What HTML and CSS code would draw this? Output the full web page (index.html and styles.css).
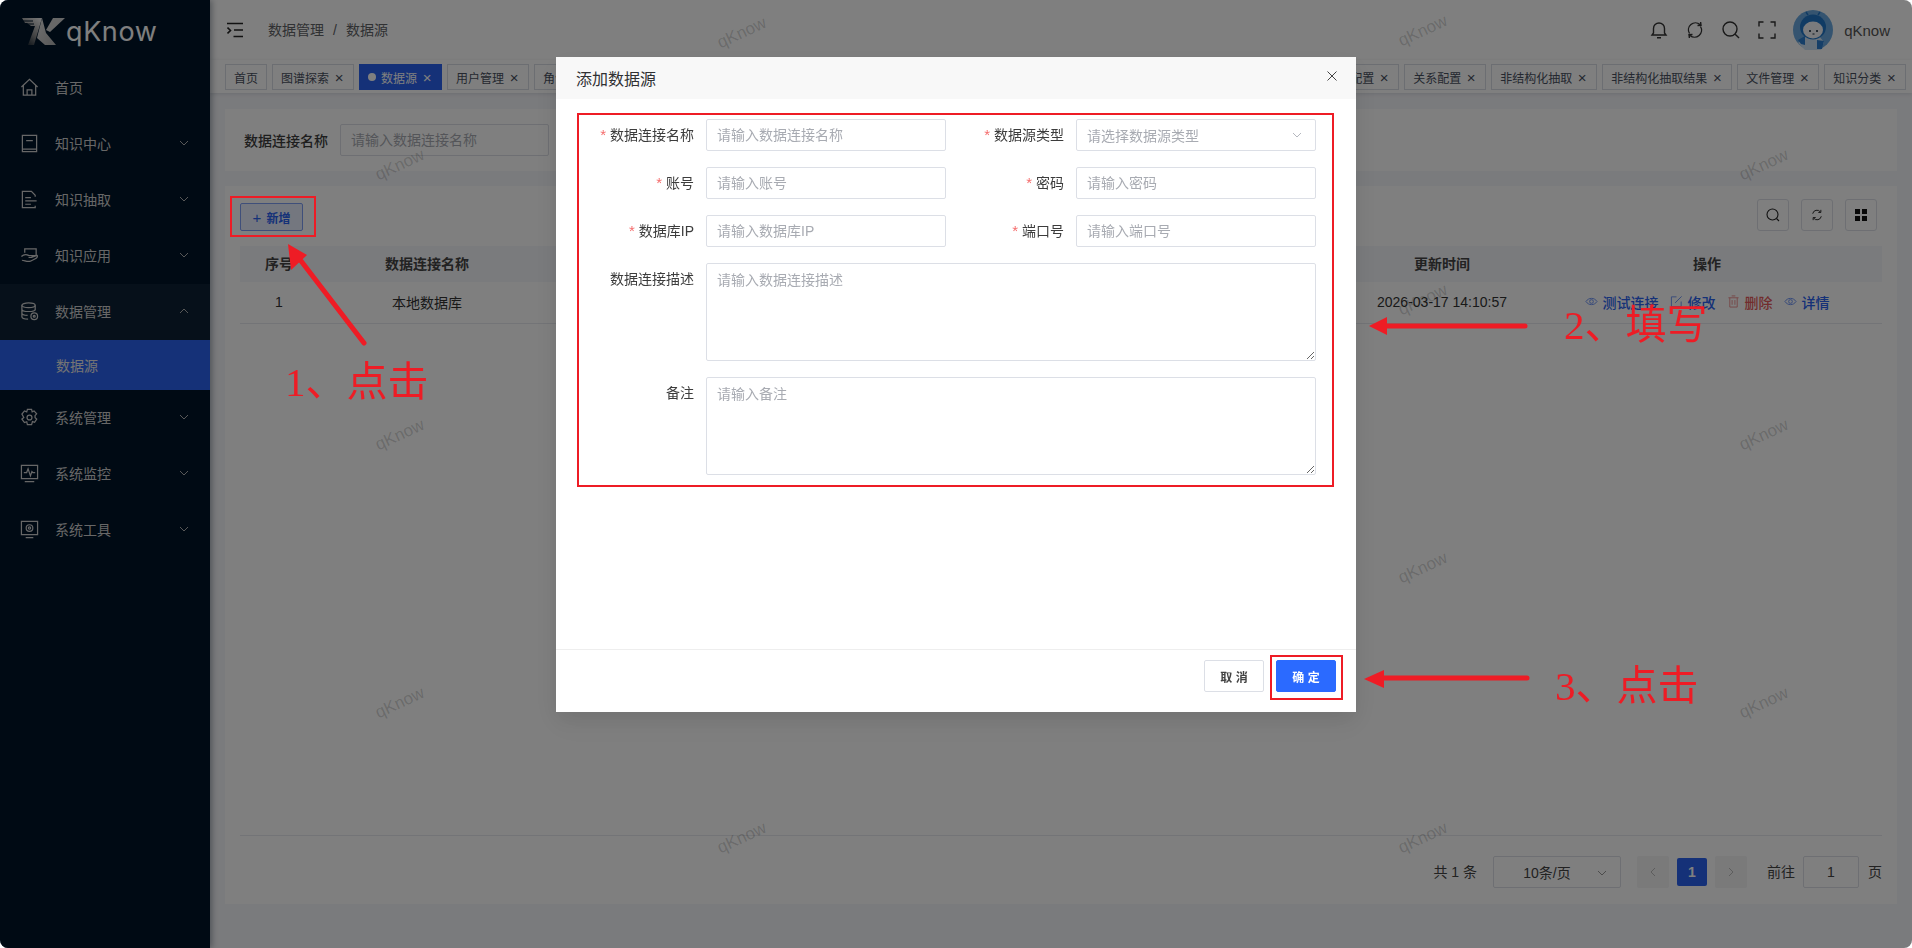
FILE: index.html
```html
<!DOCTYPE html>
<html lang="zh-CN">
<head>
<meta charset="utf-8">
<title>数据源</title>
<link rel="stylesheet" href="styles.css">
</head>
<body>
<div class="app">
  <aside class="sidebar">
    <div class="logo">
      <svg class="logo-mark" viewBox="0 0 44 30" width="44" height="30">
        <defs>
          <linearGradient id="lg" x1="0.8" y1="0" x2="0.2" y2="1"><stop offset="0" stop-color="#e6e6e6"/><stop offset="0.55" stop-color="#8a8a8a"/><stop offset="1" stop-color="#1a2530"/></linearGradient>
          <linearGradient id="lk" x1="0" y1="0" x2="1" y2="1"><stop offset="0" stop-color="#e0e0e0"/><stop offset="1" stop-color="#b0b0b0"/></linearGradient>
        </defs>
        <path d="M1 2H21L13 29H7L14 10H10L6 7H4z" fill="url(#lg)"/>
        <path d="M2 5H12M6 8H13" stroke="#001529" stroke-width="1"/>
        <path d="M21 2 25 17 35 29H24L16 22z" fill="url(#lk)"/>
        <path d="M32 2H44L29 16 25 14z" fill="#cfcfcf"/>
      </svg>
      <span class="logo-text">qKnow</span>
    </div>
    <nav class="menu">
      <a class="menu-item"><svg class="mi" viewBox="0 0 20 20"><path d="M1.500 9.500 10 1.500l8.500 8M3.500 8v10h13V8M7.500 18v-5.500h5V18"/></svg><span>首页</span></a>
      <a class="menu-item"><svg class="mi" viewBox="0 0 20 20"><path d="M2.500 16V1.500h15v17h-15V16h15M6.500 7h7"/></svg><span>知识中心</span><svg class="chev" viewBox="0 0 10 6"><path d="M1 1l4 4 4-4"/></svg></a>
      <a class="menu-item"><svg class="mi" viewBox="0 0 20 20"><path d="M16 7V5.500L12 1.500H2.500v17H16v-2M5.500 8h6M5.500 11.500h12M5.500 15h6"/></svg><span>知识抽取</span><svg class="chev" viewBox="0 0 10 6"><path d="M1 1l4 4 4-4"/></svg></a>
      <a class="menu-item"><svg class="mi" viewBox="0 0 20 20"><path d="M5 7V3h12v7H8M1.500 11c3-3 6-2 8-1h3c1 1 0 2-1 2H9m3 0 6-2c1 1 0 2-1 3l-6 3c-4 1-6-1-9-1"/></svg><span>知识应用</span><svg class="chev" viewBox="0 0 10 6"><path d="M1 1l4 4 4-4"/></svg></a>
      <a class="menu-item parent"><svg class="mi" viewBox="0 0 20 20"><ellipse cx="9" cy="3.500" rx="7" ry="2.500"/><path d="M2 3.500v12c0 1.500 3 2.500 6.500 2.500M16 3.500V9M2 7.500c0 1.500 3 2.500 7 2.500s7-1 7-2.500M2 11.500c0 1.500 3 2.500 6 2.500"/><circle cx="15" cy="15" r="3.500"/><circle cx="15" cy="15" r="1"/></svg><span>数据管理</span><svg class="chev" viewBox="0 0 10 6"><path d="M1 5l4-4 4 4"/></svg></a>
      <a class="sub-item">数据源</a>
      <a class="menu-item"><svg class="mi" viewBox="0 0 20 20"><path d="M7.800 1.500h4.400l.6 2.500 2-.9 2.700 3-1.700 2 .1 2 1.700 1.500-2.200 3.500-2.300-.8-.9 3.200H7.800l-.7-3-2.400.8-2.700-3.700L4 10l-2-3.500 2.700-3.400 2.400 1z"/><circle cx="10" cy="10" r="2.600"/></svg><span>系统管理</span><svg class="chev" viewBox="0 0 10 6"><path d="M1 1l4 4 4-4"/></svg></a>
      <a class="menu-item"><svg class="mi" viewBox="0 0 20 20"><path d="M1.500 1.500h17v14h-17zM5 18.500h10M4 9h3l1.500-4 2.500 7.500L12.500 8l1 1H16"/></svg><span>系统监控</span><svg class="chev" viewBox="0 0 10 6"><path d="M1 1l4 4 4-4"/></svg></a>
      <a class="menu-item"><svg class="mi" viewBox="0 0 20 20"><path d="M1.500 1.500h17v14h-17zM6 18.500h8"/><circle cx="10" cy="8.500" r="3.500"/><circle cx="10" cy="8.500" r="1.200"/></svg><span>系统工具</span><svg class="chev" viewBox="0 0 10 6"><path d="M1 1l4 4 4-4"/></svg></a>
    </nav>
  </aside>

  <main class="main">
    <header class="topbar">
      <svg class="toggler" viewBox="0 0 16 16"><path d="M0 1.500h16M7 8h9M6.500 14.500H16M.5 5.500 3.500 8.500.5 11.500"/></svg>
      <div class="crumbs"><span>数据管理</span><i>/</i><span>数据源</span></div>
      <div class="top-tools">
        <svg class="tool" viewBox="0 0 18 18"><path d="M2 14h14l-1.500-2V7.500a5.500 5.500 0 0 0-11 0V12zM7 16.800h4"/></svg>
        <svg class="tool" viewBox="0 0 18 18"><path d="M3.500 12.500A7 7 0 0 1 14 3.500M14.500 5.500A7 7 0 0 1 4 14.500M11.500 4.500 15 4.300 14.600 1M6.500 13.500 3 13.700 3.400 17"/></svg>
        <svg class="tool" viewBox="0 0 18 18"><circle cx="8" cy="8" r="7"/><path d="M13.200 13.200 17 17"/></svg>
        <svg class="tool" viewBox="0 0 18 18"><path d="M1 5.500V1h4.500M12.500 1H17v4.500M17 12.500V17h-4.500M5.500 17H1v-4.500"/></svg>
      </div>
      <svg class="avatar" viewBox="0 0 40 40">
        <circle cx="20" cy="20" r="20" fill="#6aa9e0"/>
        <path d="M5 33 14 26h12l5 6-3 8H12z" fill="#cfe3f5"/>
        <path d="M5 30 12 26v9l-4-1zM24 30l7 1-2 8h-5z" fill="#2c7fd0"/>
        <ellipse cx="20" cy="17" rx="13" ry="12.500" fill="#2176c8"/>
        <ellipse cx="20" cy="20" rx="10" ry="8.500" fill="#f4f7fb"/>
        <circle cx="17" cy="21" r="1" fill="#123"/><circle cx="24" cy="21" r="1" fill="#123"/>
        <path d="M15 5l-2-3M25 5l2-3" stroke="#2176c8" stroke-width="1.500" fill="none"/>
        <path d="M19.500 24h2" stroke="#123"/>
      </svg>
      <span class="user">qKnow</span>
    </header>

    <div class="tabs">
      <a class="tab">首页</a>
      <a class="tab">图谱探索<b>×</b></a>
      <a class="tab active"><em></em>数据源<b>×</b></a>
      <a class="tab">用户管理<b>×</b></a>
      <a class="tab">角色管理<b>×</b></a>
      <a class="tab">菜单管理<b>×</b></a>
      <a class="tab">部门管理<b>×</b></a>
      <a class="tab">岗位管理<b>×</b></a>
      <a class="tab">字典管理<b>×</b></a>
      <a class="tab">参数设置<b>×</b></a>
      <a class="tab">通知公告<b>×</b></a>
      <a class="tab">日志管理<b>×</b></a>
      <a class="tab">在线用户<b>×</b></a>
      <a class="tab">实体配置<b>×</b></a>
      <a class="tab">关系配置<b>×</b></a>
      <a class="tab">非结构化抽取<b>×</b></a>
      <a class="tab">非结构化抽取结果<b>×</b></a>
      <a class="tab">文件管理<b>×</b></a>
      <a class="tab">知识分类<b>×</b></a>
    </div>

    <section class="content">
      <div class="card search">
        <label class="search-label">数据连接名称</label>
        <input class="input search-input" placeholder="请输入数据连接名称">
      </div>
      <div class="card list">
        <div class="toolbar">
          <button class="add"><span class="plus">+</span>新增</button>
          <div class="tool-btns">
            <span class="sq"><svg viewBox="0 0 14 14"><circle cx="6.500" cy="6.500" r="5.500"/><path d="M10.500 10.500 13 13"/></svg></span>
            <span class="sq small"><svg viewBox="0 0 14 14"><path d="M2 5.500A5 5 0 0 1 11 3.500M12 8.500A5 5 0 0 1 3 10.500M11.500 1v3H8.500M2.500 13v-3h3"/></svg></span>
            <span class="sq"><svg viewBox="0 0 14 14"><path class="fill" d="M1 1h5v5H1zM8 1h5v5H8zM1 8h5v5H1zM8 8h5v5H8z"/></svg></span>
          </div>
        </div>
        <div class="table">
          <div class="tr th"><span>序号</span><span>数据连接名称</span><span></span><span>更新时间</span><span>操作</span></div>
          <div class="tr td"><span>1</span><span>本地数据库</span><span></span><span>2026-03-17 14:10:57</span>
            <span class="ops">
              <a><svg viewBox="0 0 14 14"><path d="M1 7c3-4.500 9-4.500 12 0-3 4.500-9 4.500-12 0z"/><circle cx="7" cy="7" r="2"/></svg>测试连接</a>
              <a><svg viewBox="0 0 14 14"><path d="M7 2H1.500v10.500H12V7M5.500 8.500 12.500 1.500"/></svg>修改</a>
              <a class="danger"><svg viewBox="0 0 14 14"><path d="M1.500 3h11M3 3v10h8V3M5 1h4M5.500 5.500v5M8.500 5.500v5"/></svg>删除</a>
              <a><svg viewBox="0 0 14 14"><path d="M1 7c3-4.500 9-4.500 12 0-3 4.500-9 4.500-12 0z"/><circle cx="7" cy="7" r="2"/></svg>详情</a>
            </span>
          </div>
        </div>
        <footer class="pager">
          <span class="total">共 1 条</span>
          <span class="size">10条/页<svg class="chev" viewBox="0 0 10 6"><path d="M1 1l4 4 4-4"/></svg></span>
          <span class="pg off"><svg viewBox="0 0 6 10"><path d="M5 1 1 5l4 4"/></svg></span>
          <span class="pg on">1</span>
          <span class="pg off"><svg viewBox="0 0 6 10"><path d="M1 1l4 4-4 4"/></svg></span>
          <span class="goto">前往</span>
          <span class="jump">1</span>
          <span class="page-word">页</span>
        </footer>
      </div>
      <span class="wm wm1">qKnow</span><span class="wm wm2">qKnow</span><span class="wm wm3">qKnow</span>
      <span class="wm wm4">qKnow</span><span class="wm wm5">qKnow</span><span class="wm wm6">qKnow</span>
      <span class="wm wm7">qKnow</span><span class="wm wm8">qKnow</span><span class="wm wm9">qKnow</span>
      <span class="wm wm10">qKnow</span><span class="wm wm11">qKnow</span><span class="wm wm12">qKnow</span>
    </section>
  </main>
</div>

<div class="overlay">
  <div class="modal">
    <div class="modal-head"><span>添加数据源</span><svg class="close" viewBox="0 0 10 10"><path d="M.5.500l9 9M9.500.500l-9 9"/></svg></div>
    <form class="modal-body">
      <div class="field"><label class="req">数据连接名称</label><input class="input" placeholder="请输入数据连接名称"></div>
      <div class="field"><label class="req">数据源类型</label><div class="input select">请选择数据源类型<svg class="chev" viewBox="0 0 10 6"><path d="M1 1l4 4 4-4"/></svg></div></div>
      <div class="field"><label class="req">账号</label><input class="input" placeholder="请输入账号"></div>
      <div class="field"><label class="req">密码</label><input class="input" placeholder="请输入密码"></div>
      <div class="field"><label class="req">数据库IP</label><input class="input" placeholder="请输入数据库IP"></div>
      <div class="field"><label class="req">端口号</label><input class="input" placeholder="请输入端口号"></div>
      <div class="field wide"><label>数据连接描述</label><textarea class="input area" placeholder="请输入数据连接描述"></textarea></div>
      <div class="field wide"><label>备注</label><textarea class="input area" placeholder="请输入备注"></textarea></div>
    </form>
    <div class="modal-foot">
      <button class="btn">取 消</button>
      <button class="btn primary">确 定</button>
    </div>
  </div>
</div>

<div class="marks">
  <svg class="marks-svg" viewBox="0 0 1912 948" width="1912" height="948">
    <rect x="231" y="197" width="84" height="39"/>
    <rect x="578" y="114" width="755" height="372"/>
    <rect x="1271" y="656" width="71" height="43"/>
    <path class="line" d="M364 343 298 257"/>
    <path class="head" d="M288 244 307 255 291 270z"/>
    <path class="line" d="M1525 326H1380"/>
    <path class="head" d="M1369 326 1387 317V335z"/>
    <path class="line" d="M1527 678H1378"/>
    <path class="head" d="M1364 679 1384 670V688z"/>
  </svg>
  <div class="note n1">1、点击</div>
  <div class="note n2">2、填写</div>
  <div class="note n3">3、点击</div>
</div>
</body>
</html>
```
FILE: styles.css
```css
* { box-sizing: border-box; }
html, body { margin: 0; height: 100%; background: #fff; overflow: hidden; }
body, input, textarea, button { font-family: "Liberation Sans", "Noto Sans CJK SC", sans-serif; }

.app { display: flex; width: 1912px; height: 948px; border-radius: 8px; overflow: hidden; background: #f5f6fa; font-size: 14px; color: #333; }

/* sidebar */
.sidebar { flex: 0 0 210px; background: #001529; box-shadow: 2px 0 6px rgba(0, 21, 41, .35); position: relative; z-index: 2; color: #cfcfcf; }
.logo { height: 60px; display: flex; align-items: center; padding: 2px 0 0 21px; gap: 1px; }
.logo-text { font-family: Inter, "Liberation Sans", sans-serif; font-size: 27px; font-weight: 400; color: #fff; letter-spacing: .6px; }
.menu-item { height: 56px; display: flex; align-items: center; padding: 0 0 2px 20px; gap: 16px; }
.menu-item span { flex: 1; }
.mi { width: 19px; height: 19px; fill: none; stroke: #cfcfcf; stroke-width: 1.3; flex: none; }
.chev { width: 10px; height: 6px; fill: none; stroke: currentColor; stroke-width: 1; }
.menu-item .chev { margin-right: 21px; color: #b0b0b0; }
.parent { background: #0c2135; }
.sub-item { height: 50px; display: flex; align-items: center; padding-left: 56px; background: #2a62f0; color: #e8e8e8; }

/* main */
.main { flex: 1; display: flex; flex-direction: column; min-width: 0; }
.topbar { height: 60px; flex: none; background: #fff; display: flex; align-items: center; padding-left: 17px; }
.toggler { width: 16px; height: 16px; fill: none; stroke: #222; stroke-width: 1.6; }
.crumbs { margin-left: 25px; flex: 1; display: flex; align-items: baseline; gap: 9px; color: #606266; padding-bottom: 2px; }
.crumbs i { font-style: normal; width: 4px; }
.top-tools { display: flex; gap: 18px; align-items: center; }
.tool { width: 18px; height: 18px; fill: none; stroke: #333; stroke-width: 1.4; }
.avatar { width: 40px; height: 40px; margin-left: 17px; }
.user { margin: 0 22px 0 11px; font-size: 15px; color: #555; }

.tabs { height: 33px; flex: none; background: #fff; display: flex; gap: 5px; align-items: flex-start; padding: 4px 0 0 15px; box-shadow: 0 1px 4px rgba(0, 21, 41, .12); position: relative; white-space: nowrap; overflow: hidden; }
.tab { height: 26px; flex: none; border: 1px solid #d8dce5; background: #fff; font-size: 12px; color: #495060; display: flex; align-items: center; padding: 0 8px; }
.tab b { font-weight: 400; font-size: 15px; margin-left: 4px; width: 12px; text-align: center; }
.tab.active { background: #2a62f0; border-color: #2a62f0; color: #fff; }
.tab em { width: 8px; height: 8px; border-radius: 50%; background: #fff; margin-right: 5px; }

.content { flex: 1; padding: 16px 15px 0; display: flex; flex-direction: column; gap: 15px; position: relative; }
.card { background: #fff; }
.search { height: 62px; flex: none; display: flex; align-items: center; padding-left: 19px; gap: 12px; }
.search-label { font-weight: 500; color: #3c3c3c; }
.input { height: 32px; border: 1px solid #dcdfe6; border-radius: 2px; padding: 0 10px; font-size: 14px; background: #fff; outline: none; color: #606266; display: block; }
.input::placeholder { color: #a8abb2; opacity: 1; }
.search-input { width: 209px; }

.list { height: 718px; flex: none; padding: 13px 15px 0; display: flex; flex-direction: column; }
.toolbar { height: 32px; flex: none; display: flex; justify-content: space-between; align-items: flex-end; padding-right: 5px; }
.add { width: 63px; height: 28px; border: 1px solid #7f9ff5; border-radius: 2px; background: #e8eeff; color: #2a62f0; font-size: 12px; font-weight: 700; padding: 0; }
.plus { font-weight: 400; font-size: 15px; margin-right: 5px; }
.tool-btns { display: flex; gap: 12px; }
.sq { width: 32px; height: 32px; border: 1px solid #dcdfe6; border-radius: 3px; display: flex; align-items: center; justify-content: center; }
.sq svg { width: 14px; height: 14px; fill: none; stroke: #222; stroke-width: 1.1; }
.sq.small svg { width: 12px; height: 12px; }
.sq .fill { fill: #111; stroke: none; }

.table { margin-top: 15px; flex: 1; }
.tr { display: grid; grid-template-columns: 78px 218px 1fr 180px 350px; align-items: center; text-align: center; }
.th { height: 36px; padding-bottom: 3px; background: #f5f6fa; font-weight: 600; color: #444; }
.td { height: 42px; padding-bottom: 2px; border-bottom: 1px solid #e6e8ee; color: #333; }
.ops { display: flex; justify-content: center; gap: 11px; }
.ops a { display: flex; align-items: center; gap: 5px; color: #2a62f0; font-weight: 500; }
.ops svg { width: 13px; height: 13px; fill: none; stroke: currentColor; stroke-width: 1; opacity: .7; }
.ops .danger { color: #e45b5b; }

.pager { flex: none; height: 69px; border-top: 1px solid #e6e8ee; display: flex; justify-content: flex-end; align-items: flex-start; padding-top: 20px; color: #444; }
.total { line-height: 32px; margin-right: 16px; }
.size { width: 128px; height: 32px; border: 1px solid #dcdfe6; border-radius: 2px; display: flex; align-items: center; justify-content: center; position: relative; margin-right: 16px; padding-right: 20px; }
.size .chev { position: absolute; right: 13px; top: 13px; color: #999; }
.pg { width: 32px; height: 32px; display: flex; align-items: center; justify-content: center; border-radius: 2px; margin-right: 8px; background: #f4f4f5; }
.pg svg { width: 6px; height: 10px; fill: none; stroke: #bbb; stroke-width: 1; }
.pg.on { width: 30px; height: 28px; margin-top: 2px; background: #2a62f0; color: #fff; font-weight: 700; }
.goto { line-height: 32px; margin-left: 12px; margin-right: 8px; }
.jump { width: 56px; height: 32px; border: 1px solid #dcdfe6; border-radius: 2px; display: flex; align-items: center; justify-content: center; }
.page-word { line-height: 32px; margin-left: 9px; }

/* watermarks */
.wm { position: absolute; font-size: 17px; color: rgba(0, 0, 0, .18); transform: translate(-50%, -50%) rotate(-25deg); white-space: nowrap; }
.wm1 { left: 190px; top: 72px; }
.wm2 { left: 190px; top: 342px; }
.wm3 { left: 190px; top: 610px; }
.wm4 { left: 532px; top: -60px; }
.wm5 { left: 532px; top: 745px; }
.wm6 { left: 1213px; top: -62px; }
.wm7 { left: 1213px; top: 207px; }
.wm8 { left: 1213px; top: 475px; }
.wm9 { left: 1213px; top: 745px; }
.wm10 { left: 1554px; top: 72px; }
.wm11 { left: 1554px; top: 342px; }
.wm12 { left: 1554px; top: 610px; }

/* dialog */
.overlay { position: fixed; inset: 0; width: 1912px; height: 948px; background: rgba(0, 0, 0, .5); border-radius: 8px; z-index: 10; padding-top: 57px; }
.modal { width: 800px; height: 655px; margin: 0 auto; background: #fff; display: flex; flex-direction: column; box-shadow: 0 12px 32px 4px rgba(0, 0, 0, .04), 0 8px 20px rgba(0, 0, 0, .08); }
.modal-head { height: 42px; flex: none; background: #f8f8f8; display: flex; align-items: center; justify-content: space-between; padding: 0 20px; font-size: 16px; color: #303133; }
.close { width: 10px; height: 10px; margin-top: -4px; margin-right: -1px; fill: none; stroke: #444; stroke-width: 1; }
.modal-body { flex: 1; display: grid; grid-template-columns: 372px 370px; grid-auto-rows: min-content; row-gap: 16px; padding: 20px 0 0 18px; margin: 0; }
.field { display: grid; grid-template-columns: 120px 1fr; column-gap: 12px; font-size: 14px; color: #3c3c3c; }
.field:nth-child(even) { grid-template-columns: 118px 1fr; }
.field.wide { grid-template-columns: 120px 1fr; }
.field label { text-align: right; line-height: 32px; }
.req::before { content: "*"; color: #f56c6c; margin-right: 4px; font-size: 15px; }
.wide { grid-column: 1 / span 2; }
.select { display: flex; align-items: center; justify-content: space-between; color: #a8abb2; padding-right: 13px; }
.select .chev { color: #b5b8bf; }
.input.area { height: 98px; width: 100%; padding: 8px 10px; line-height: 16px; resize: vertical; }
.modal-foot { height: 63px; flex: none; border-top: 1px solid #eee; display: flex; justify-content: flex-end; gap: 12px; padding: 10px 20px 0 0; }
.btn { width: 60px; height: 32px; border: 1px solid #dcdfe6; border-radius: 2px; background: #fff; color: #444; font-size: 12px; font-weight: 700; padding: 0; }
.btn.primary { background: #2b6aff; border-color: #2b6aff; color: #fff; }

/* hand-drawn annotations */
.marks { position: fixed; inset: 0; z-index: 20; pointer-events: none; }
.marks-svg { display: block; }
.marks-svg rect { fill: none; stroke: #ee1c25; stroke-width: 2; }
.marks-svg .line { stroke: #ee1c25; stroke-width: 5; stroke-linecap: round; fill: none; }
.marks-svg .head { fill: #ee1c25; }
.note { position: absolute; font-family: "Liberation Serif", "Noto Sans CJK SC", serif; font-size: 41px; line-height: 44px; color: #ee1c25; white-space: nowrap; }
.n1 { left: 285px; top: 360px; }
.n2 { left: 1564px; top: 303px; }
.n3 { left: 1555px; top: 664px; }
```
